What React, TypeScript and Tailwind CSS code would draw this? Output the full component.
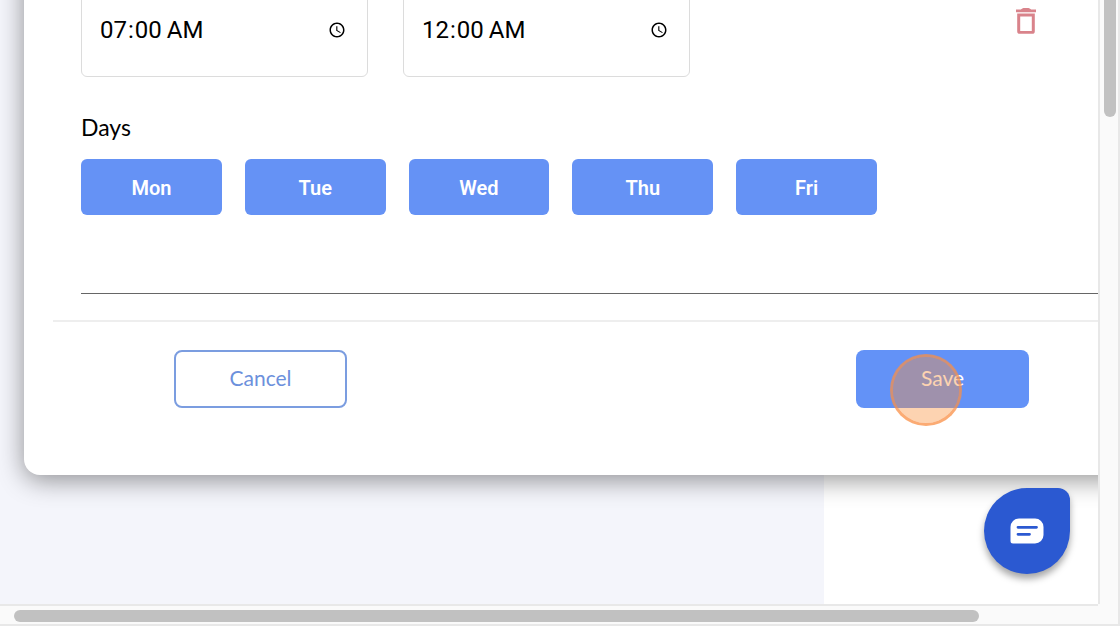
const days = ["Mon", "Tue", "Wed", "Thu", "Fri"];

function TimeField({ label, value }: { label: string; value: string }) {
  return (
    <input
      type="time"
      aria-label={label}
      defaultValue={value}
      className="h-24 w-[287px] rounded-md border border-[#dcdcdc] bg-white pt-0.5 pr-[18px] pl-[17px] font-[Roboto,sans-serif] text-2xl text-black [&::-webkit-calendar-picker-indicator]:size-[18px]"
    />
  );
}

function TrashIcon() {
  return (
    <svg viewBox="0 0 20 26" className="h-[26px] w-5" fill="#d9838b" aria-hidden="true">
      <path d="M0 1.5h4.800Q6.500 0 7.500 0h5q1 0 2.700 1.500H20v2.700H0z" />
      <path
        fillRule="evenodd"
        d="M1.2 5.400h17.600v17.800a2.600 2.600 0 0 1-2.600 2.600H3.800a2.600 2.600 0 0 1-2.600-2.600zM4.200 8.400v14.600h11.600V8.400z"
      />
    </svg>
  );
}

function ChatIcon() {
  return (
    <svg viewBox="0 0 34 26" className="h-[26px] w-[34px]" aria-hidden="true">
      <path
        fill="#fff"
        d="M9 .5h16a8.500 8.500 0 0 1 8.500 8.500v8a8.500 8.500 0 0 1-8.500 8.500H3A2.500 2.500 0 0 1 .5 23V9A8.500 8.500 0 0 1 9 .5z"
      />
      <path stroke="#2b59d1" strokeWidth="2.800" strokeLinecap="round" d="M8 9.300h18.500M8 16.300h11.500" />
    </svg>
  );
}

function SchedulePanel() {
  return (
    <section className="-mt-10 -mr-12 ml-6 rounded-2xl bg-white pt-[21px] pr-12 pb-[67px] pl-[29px] shadow-[0_5px_26px_rgba(0,0,0,0.42)]">
      <div className="pl-7">
        <div className="flex items-start justify-between pr-[62px]">
          <div className="flex gap-[35px]">
            <TimeField label="Start time" value="07:00" />
            <TimeField label="End time" value="00:00" />
          </div>
          <button type="button" aria-label="Delete" className="mt-[27px]">
            <TrashIcon />
          </button>
        </div>

        <h2 className="mt-9 font-[Lato,sans-serif] text-[23px] leading-7 text-black">Days</h2>
        <div className="mt-[18px] grid max-w-[796px] grid-cols-5 gap-[23px]">
          {days.map((day) => (
            <button
              key={day}
              type="button"
              className="h-14 rounded-md bg-[#6592f5] pt-px font-[Roboto,sans-serif] text-xl font-semibold text-white"
            >
              {day}
            </button>
          ))}
        </div>
        <hr className="mt-[78px] border-t border-[#666666]" />
      </div>

      <footer className="mt-[26px] flex justify-between border-t-2 border-[#eeeeee] pt-7 pr-[69px] pl-[121px] font-[Lato,sans-serif] text-[21px]">
        <button
          type="button"
          className="h-[58px] w-[173px] rounded-lg border-2 border-[#7b9de0] bg-white pb-0.5 text-[#6c90dc]"
        >
          Cancel
        </button>
        <div className="relative">
          <button type="button" className="h-[58px] w-[173px] rounded-lg bg-[#6392f7] pb-0.5 text-white">
            Save
          </button>
          <span className="pointer-events-none absolute top-1 left-[34px] size-[72px] rounded-full border-3 border-[#f98f45]/75 bg-[#fb923c]/40 bg-clip-padding" />
        </div>
      </footer>
    </section>
  );
}

export default function App() {
  return (
    <div className="grid min-h-screen grid-cols-[minmax(0,1fr)_22px] grid-rows-[1fr_22px] bg-[#fafafa]">
      <main className="relative grid overflow-hidden">
        <div className="col-start-1 row-start-1 flex bg-[#f4f5fb]">
          <div className="flex-1" />
          <div className="w-[274px] bg-white" />
        </div>
        <div className="z-10 col-start-1 row-start-1 pb-32">
          <SchedulePanel />
        </div>
        <button
          type="button"
          aria-label="Open chat"
          className="absolute right-7 bottom-[30px] z-20 flex size-[86px] items-center justify-center rounded-[43px] rounded-tr-xl bg-[#2b59d1] shadow-[0_5px_7px_rgba(0,0,0,0.35)]"
        >
          <ChatIcon />
        </button>
      </main>

      <div className="border-x-2 border-[#e8e8e8] pl-1">
        <div className="h-[117px] w-3 rounded-b-full bg-[#c1c1c1]" />
      </div>
      <div className="border-y-2 border-[#e8e8e8] pt-1 pr-[119px] pl-3.5">
        <div className="h-3 rounded-full bg-[#c1c1c1]" />
      </div>
      <div className="border-r-2 border-b-2 border-[#e8e8e8]" />
    </div>
  );
}
